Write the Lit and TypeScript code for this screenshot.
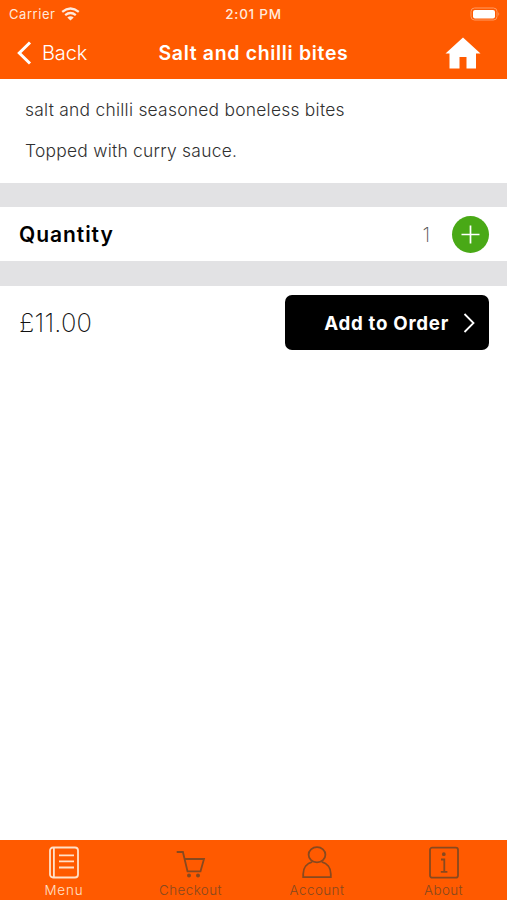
import { LitElement, html, css, svg } from "lit";
import { customElement } from "lit/decorators.js";
import { classMap } from "lit/directives/class-map.js";

const icons = {
  menu: svg`<rect x="1" y="1.5" width="28" height="30" rx="3"/><path d="M4.9 2v29M10 9.4h15M10 15.4h15M10 21.5h15"/>`,
  checkout: svg`<path d="M.7 6h6.2l4.6 19.3h13L28 13H8.7"/><circle class="dot" cx="13" cy="29.6" r="1.1"/><circle class="dot" cx="22" cy="29.6" r="1.1"/>`,
  account: svg`<ellipse cx="15" cy="8.7" rx="8.4" ry="7.6"/><path d="M10.3 15.8C5 17.2 1.2 21.8 1.2 28v3.2h27.6V28c0-6.2-3.8-10.8-9.1-12.2"/>`,
  about: svg`<rect x="1" y="1.7" width="28" height="30" rx="2.2"/><path d="M12 13.5h3.3v12.3M11.8 25.8h6.6"/><circle class="dot" cx="14.8" cy="8.2" r="1"/>`,
};

const tabs = [
  { id: "menu", label: "Menu" },
  { id: "checkout", label: "Checkout" },
  { id: "account", label: "Account" },
  { id: "about", label: "About" },
] as const;

@customElement("app-root")
export class AppRoot extends LitElement {
  static styles = css`
    :host { display: flex; flex-direction: column; height: 900px; background: #fff; font-family: Inter, "Open Sans", sans-serif; color: #000; overflow: hidden; }
    * { box-sizing: border-box; }
    svg { display: block; fill: none; stroke: currentColor; }
    header { height: 79px; background: #ff5a00; color: #fff; flex: none; }
    .status, .nav { display: grid; grid-template-columns: 1fr auto 1fr; align-items: center; }
    .status { height: 27px; padding: 0 9px; font-size: 13px; color: #ffe9dc; }
    .carrier { display: flex; align-items: center; gap: 6px; letter-spacing: 0.55px; }
    .time { font-size: 13.5px; font-weight: 500; letter-spacing: 0.75px; }
    .battery { justify-self: end; margin-right: -2px; }
    .nav { height: 52px; padding: 0 17px; }
    .back { display: flex; align-items: center; gap: 10px; font-size: 20px; font-weight: 300; letter-spacing: -0.15px; }
    .title { font-size: 19.5px; font-weight: 600; letter-spacing: 0.66px; }
    .home { justify-self: end; margin-right: 9px; }
    .description { height: 104px; flex: none; padding: 19.5px 25px 0; font-size: 17.4px; font-weight: 300; line-height: 21px; color: #303030; }
    .description p { margin: 0 0 20.5px; letter-spacing: 0.26px; white-space: nowrap; }
    .gap { height: 24px; background: #e2e2e4; flex: none; }
    .gap.second { height: 25px; }
    .quantity { height: 54px; flex: none; display: flex; align-items: center; padding: 0 18px 0 19px; }
    .quantity h2 { margin: 0; padding-top: 2px; flex: 1; font-size: 21px; line-height: 26px; font-weight: 600; letter-spacing: 0.95px; }
    .count { font-size: 20px; font-weight: 200; color: #555; margin-right: 22px; padding-top: 1px; }
    .plus { width: 37px; height: 37px; border-radius: 50%; background: #49a916; color: #fff; display: grid; place-items: center; }
    .order { flex: 1; display: flex; justify-content: space-between; align-items: flex-start; padding: 9px 18px 0 19px; }
    .price { font-size: 25.5px; line-height: 55px; font-weight: 200; color: #111; letter-spacing: 0.2px; }
    .add { width: 204px; height: 55px; border-radius: 7px; background: #000; color: #fff; display: flex; align-items: center; justify-content: flex-end; gap: 14px; padding-right: 14px; font-size: 18.7px; font-weight: 700; letter-spacing: 0.72px; }
    .add span { padding-top: 1px; }
    .tabs { height: 60px; flex: none; display: grid; grid-template-columns: repeat(4, 126.5px); background: #ff5a00; }
    .tab { display: flex; flex-direction: column; align-items: center; padding: 6px 0 0 1.5px; color: #87491f; font-size: 13.4px; font-weight: 300; line-height: 18px; letter-spacing: 0.45px; }
    .tab svg { stroke-width: 1.8; margin-bottom: 2px; }
    .tab.active { color: #ffe0c8; letter-spacing: 0.9px; }
    .tab .dot { fill: currentColor; }
  `;

  render() {
    return html`
      <header>
        <div class="status">
          <div class="carrier"><span>Carrier</span>
            <svg width="19" height="14" viewBox="0 0 19 14" stroke-width="2.3"><path d="M1.2 4.8q8.3-6.6 16.6 0M4.2 8.1q5.3-4.3 10.6 0"/><path d="M9.5 13.5L6.3 10.5q3.2-2.6 6.4 0z" fill="currentColor" stroke="none"/></svg>
          </div>
          <span class="time">2:01 PM</span>
          <svg class="battery" width="30" height="14" viewBox="0 0 30 14"><rect x="1" y="1" width="26" height="12" rx="3.5" stroke="#ff9a62"/><rect x="3" y="3" width="22" height="8.5" rx="2" fill="#fff" stroke="none"/><path d="M28.5 5v4q1.5-2 0-4z" fill="#ffad7f" stroke="none"/></svg>
        </div>
        <div class="nav">
          <div class="back"><svg width="15" height="24" viewBox="0 0 15 24" stroke-width="3"><path d="M13 1.5L2.3 12 13 22.5"/></svg><span>Back</span></div>
          <span class="title">Salt and chilli bites</span>
          <svg class="home" width="36" height="32" viewBox="0 0 36 32"><path d="M18 .5L35.5 16.5H31V31.5H21.5V20H14.5V31.5H4.5V16.5H.5z" fill="currentColor" stroke="none"/></svg>
        </div>
      </header>
      <section class="description"><p>salt and chilli seasoned boneless bites</p><p>Topped with curry sauce.</p></section>
      <div class="gap"></div>
      <section class="quantity"><h2>Quantity</h2><span class="count">1</span>
        <div class="plus"><svg width="19" height="19" viewBox="0 0 19 19" stroke-width="1.7"><path d="M9.5 .5v18M.5 9.5h18"/></svg></div>
      </section>
      <div class="gap second"></div>
      <section class="order"><span class="price">£11.00</span>
        <div class="add"><span>Add to Order</span><svg width="12" height="20" viewBox="0 0 12 20" stroke-width="1.8"><path d="M1.5 1L10.5 10 1.5 19"/></svg></div>
      </section>
      <nav class="tabs">
        ${tabs.map((t) => html`<div class=${classMap({ tab: true, active: t.id === "menu" })}><svg width="30" height="33" viewBox="0 0 30 33">${icons[t.id]}</svg><span>${t.label}</span></div>`)}
      </nav>
    `;
  }
}
